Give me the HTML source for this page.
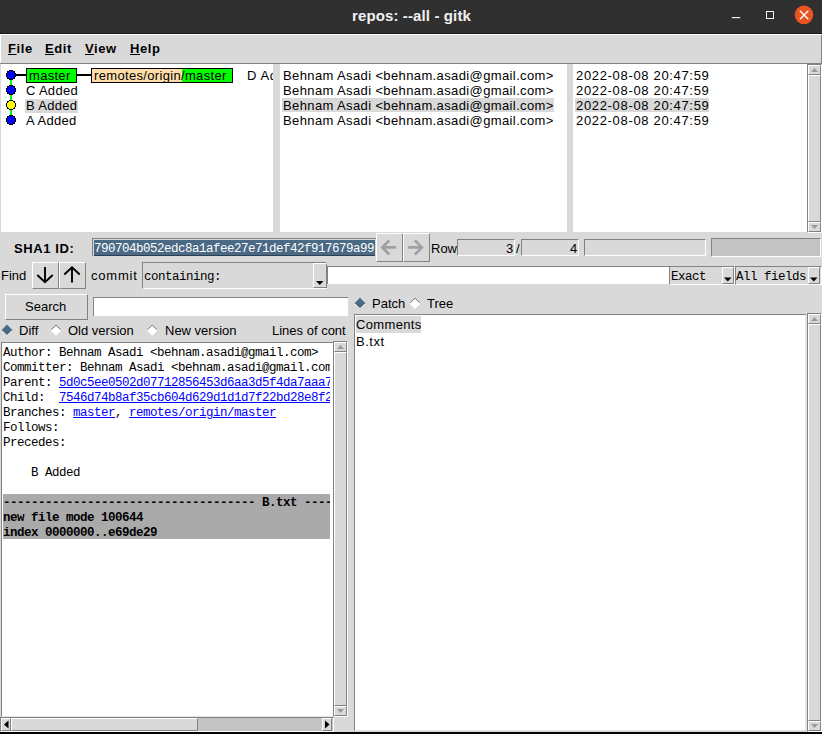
<!DOCTYPE html>
<html><head><meta charset="utf-8">
<style>
*{margin:0;padding:0;box-sizing:border-box}
html,body{width:822px;height:734px;overflow:hidden;background:#d9d9d9}
body{position:relative;font-family:"Liberation Sans",sans-serif;font-size:13px;color:#000}
.a{position:absolute}
.t{position:absolute;white-space:pre;line-height:15px;font-family:"Liberation Sans",sans-serif;font-size:13px;color:#000}
.m{font-family:"Liberation Mono",monospace;font-size:12.5px;letter-spacing:-0.5px}
.w{background:#fff}
.sunk{border-top:1px solid #828282;border-left:1px solid #828282;border-right:1px solid #fff;border-bottom:1px solid #fff}
.rais{border-top:1px solid #fff;border-left:1px solid #fff;border-right:1px solid #828282;border-bottom:1px solid #828282;background:#d9d9d9}
.ul{text-decoration:underline}
</style></head><body>

<!-- title bar -->
<div class="a" style="left:0;top:0;width:822px;height:33px;background:#303030"></div>
<div class="a" style="left:0;top:33px;width:822px;height:1px;background:#181818"></div>
<div class="t" style="left:352px;top:7px;font-size:15px;font-weight:bold;color:#f2f2f2;line-height:17px;letter-spacing:0.12px">repos: --all - gitk</div>
<svg class="a" style="left:730px;top:14px" width="12" height="6"><path d="M1.8 3.6 H10.2" stroke="#f2f2f2" stroke-width="1.2"/></svg>
<div class="a" style="left:766px;top:11px;width:8px;height:8px;border:1.5px solid #f2f2f2"></div>
<svg class="a" style="left:780px;top:0" width="42" height="33"><circle cx="24" cy="14.8" r="9.3" fill="#e95420"/><path d="M19.9 10.8 L28.3 19.2 M28.3 10.8 L19.9 19.2" stroke="#fff" stroke-width="1.3"/></svg>

<!-- menu bar -->
<div class="a" style="left:0;top:34px;width:822px;height:1px;background:#fff"></div>
<div class="a" style="left:0;top:34px;width:1px;height:30px;background:#fff"></div>
<div class="a" style="left:0;top:63px;width:822px;height:1px;background:#828282"></div>
<div class="a" style="left:821px;top:35px;width:1px;height:29px;background:#828282"></div>
<div class="t" style="left:8px;top:41px;font-weight:bold;letter-spacing:0.6px"><span class="ul">F</span>ile</div>
<div class="t" style="left:45px;top:41px;font-weight:bold;letter-spacing:0.6px"><span class="ul">E</span>dit</div>
<div class="t" style="left:85px;top:41px;font-weight:bold;letter-spacing:0.6px"><span class="ul">V</span>iew</div>
<div class="t" style="left:130px;top:41px;font-weight:bold;letter-spacing:0.6px"><span class="ul">H</span>elp</div>

<!-- top panes -->
<div class="a w" style="left:1px;top:64px;width:272px;height:168px"></div>
<div class="a w" style="left:280px;top:64px;width:287px;height:168px"></div>
<div class="a w" style="left:573px;top:64px;width:234px;height:168px"></div>

<!-- graph -->
<svg class="a" style="left:0;top:64px" width="273" height="100" shape-rendering="crispEdges">
  <rect x="10" y="11" width="2" height="45" fill="#00ff00"/>
  <rect x="15" y="10" width="11" height="2" fill="#000"/>
  <rect x="76" y="10" width="15" height="2" fill="#000"/>
  <rect x="26.5" y="4.5" width="50" height="14" fill="#00ff00" stroke="#000" stroke-width="1"/>
  <rect x="91.5" y="4.5" width="141" height="14" fill="#ffddaa" stroke="#000" stroke-width="1"/>
  <rect x="182" y="5" width="50" height="13" fill="#00ff00"/>
  <rect x="25" y="35" width="53" height="14" fill="#d9d9d9"/>
</svg>
<svg class="a" style="left:0;top:0" width="30" height="140" shape-rendering="crispEdges"><rect x="9" y="70" width="4" height="1" fill="#000"/><rect x="7" y="71" width="2" height="1" fill="#000"/><rect x="9" y="71" width="4" height="1" fill="#0000ff"/><rect x="13" y="71" width="2" height="1" fill="#000"/><rect x="7" y="72" width="1" height="1" fill="#000"/><rect x="8" y="72" width="6" height="1" fill="#0000ff"/><rect x="14" y="72" width="1" height="1" fill="#000"/><rect x="6" y="73" width="1" height="1" fill="#000"/><rect x="7" y="73" width="8" height="1" fill="#0000ff"/><rect x="15" y="73" width="1" height="1" fill="#000"/><rect x="6" y="74" width="1" height="1" fill="#000"/><rect x="7" y="74" width="8" height="1" fill="#0000ff"/><rect x="15" y="74" width="1" height="1" fill="#000"/><rect x="6" y="75" width="1" height="1" fill="#000"/><rect x="7" y="75" width="8" height="1" fill="#0000ff"/><rect x="15" y="75" width="1" height="1" fill="#000"/><rect x="6" y="76" width="1" height="1" fill="#000"/><rect x="7" y="76" width="8" height="1" fill="#0000ff"/><rect x="15" y="76" width="1" height="1" fill="#000"/><rect x="7" y="77" width="1" height="1" fill="#000"/><rect x="8" y="77" width="6" height="1" fill="#0000ff"/><rect x="14" y="77" width="1" height="1" fill="#000"/><rect x="7" y="78" width="2" height="1" fill="#000"/><rect x="9" y="78" width="4" height="1" fill="#0000ff"/><rect x="13" y="78" width="2" height="1" fill="#000"/><rect x="9" y="79" width="4" height="1" fill="#000"/><rect x="9" y="85" width="4" height="1" fill="#000"/><rect x="7" y="86" width="2" height="1" fill="#000"/><rect x="9" y="86" width="4" height="1" fill="#0000ff"/><rect x="13" y="86" width="2" height="1" fill="#000"/><rect x="7" y="87" width="1" height="1" fill="#000"/><rect x="8" y="87" width="6" height="1" fill="#0000ff"/><rect x="14" y="87" width="1" height="1" fill="#000"/><rect x="6" y="88" width="1" height="1" fill="#000"/><rect x="7" y="88" width="8" height="1" fill="#0000ff"/><rect x="15" y="88" width="1" height="1" fill="#000"/><rect x="6" y="89" width="1" height="1" fill="#000"/><rect x="7" y="89" width="8" height="1" fill="#0000ff"/><rect x="15" y="89" width="1" height="1" fill="#000"/><rect x="6" y="90" width="1" height="1" fill="#000"/><rect x="7" y="90" width="8" height="1" fill="#0000ff"/><rect x="15" y="90" width="1" height="1" fill="#000"/><rect x="6" y="91" width="1" height="1" fill="#000"/><rect x="7" y="91" width="8" height="1" fill="#0000ff"/><rect x="15" y="91" width="1" height="1" fill="#000"/><rect x="7" y="92" width="1" height="1" fill="#000"/><rect x="8" y="92" width="6" height="1" fill="#0000ff"/><rect x="14" y="92" width="1" height="1" fill="#000"/><rect x="7" y="93" width="2" height="1" fill="#000"/><rect x="9" y="93" width="4" height="1" fill="#0000ff"/><rect x="13" y="93" width="2" height="1" fill="#000"/><rect x="9" y="94" width="4" height="1" fill="#000"/><rect x="9" y="100" width="4" height="1" fill="#000"/><rect x="7" y="101" width="2" height="1" fill="#000"/><rect x="9" y="101" width="4" height="1" fill="#ffff00"/><rect x="13" y="101" width="2" height="1" fill="#000"/><rect x="7" y="102" width="1" height="1" fill="#000"/><rect x="8" y="102" width="6" height="1" fill="#ffff00"/><rect x="14" y="102" width="1" height="1" fill="#000"/><rect x="6" y="103" width="1" height="1" fill="#000"/><rect x="7" y="103" width="8" height="1" fill="#ffff00"/><rect x="15" y="103" width="1" height="1" fill="#000"/><rect x="6" y="104" width="1" height="1" fill="#000"/><rect x="7" y="104" width="8" height="1" fill="#ffff00"/><rect x="15" y="104" width="1" height="1" fill="#000"/><rect x="6" y="105" width="1" height="1" fill="#000"/><rect x="7" y="105" width="8" height="1" fill="#ffff00"/><rect x="15" y="105" width="1" height="1" fill="#000"/><rect x="6" y="106" width="1" height="1" fill="#000"/><rect x="7" y="106" width="8" height="1" fill="#ffff00"/><rect x="15" y="106" width="1" height="1" fill="#000"/><rect x="7" y="107" width="1" height="1" fill="#000"/><rect x="8" y="107" width="6" height="1" fill="#ffff00"/><rect x="14" y="107" width="1" height="1" fill="#000"/><rect x="7" y="108" width="2" height="1" fill="#000"/><rect x="9" y="108" width="4" height="1" fill="#ffff00"/><rect x="13" y="108" width="2" height="1" fill="#000"/><rect x="9" y="109" width="4" height="1" fill="#000"/><rect x="9" y="115" width="4" height="1" fill="#000"/><rect x="7" y="116" width="2" height="1" fill="#000"/><rect x="9" y="116" width="4" height="1" fill="#0000ff"/><rect x="13" y="116" width="2" height="1" fill="#000"/><rect x="7" y="117" width="1" height="1" fill="#000"/><rect x="8" y="117" width="6" height="1" fill="#0000ff"/><rect x="14" y="117" width="1" height="1" fill="#000"/><rect x="6" y="118" width="1" height="1" fill="#000"/><rect x="7" y="118" width="8" height="1" fill="#0000ff"/><rect x="15" y="118" width="1" height="1" fill="#000"/><rect x="6" y="119" width="1" height="1" fill="#000"/><rect x="7" y="119" width="8" height="1" fill="#0000ff"/><rect x="15" y="119" width="1" height="1" fill="#000"/><rect x="6" y="120" width="1" height="1" fill="#000"/><rect x="7" y="120" width="8" height="1" fill="#0000ff"/><rect x="15" y="120" width="1" height="1" fill="#000"/><rect x="6" y="121" width="1" height="1" fill="#000"/><rect x="7" y="121" width="8" height="1" fill="#0000ff"/><rect x="15" y="121" width="1" height="1" fill="#000"/><rect x="7" y="122" width="1" height="1" fill="#000"/><rect x="8" y="122" width="6" height="1" fill="#0000ff"/><rect x="14" y="122" width="1" height="1" fill="#000"/><rect x="7" y="123" width="2" height="1" fill="#000"/><rect x="9" y="123" width="4" height="1" fill="#0000ff"/><rect x="13" y="123" width="2" height="1" fill="#000"/><rect x="9" y="124" width="4" height="1" fill="#000"/></svg>
<div class="t" style="left:29px;top:68px;letter-spacing:0.3px">master</div>
<div class="t" style="left:94px;top:68px;letter-spacing:0.33px">remotes/origin/master</div>
<div class="t" style="left:247px;top:68px;width:26px;overflow:hidden;letter-spacing:0.6px">D Added</div>
<div class="t" style="left:26px;top:83px;letter-spacing:0.3px">C Added</div>
<div class="t" style="left:26px;top:98px;letter-spacing:0.3px">B Added</div>
<div class="t" style="left:26px;top:113px;letter-spacing:0.3px">A Added</div>

<!-- author pane -->
<div class="a" style="left:282px;top:98px;width:272px;height:14px;background:#d9d9d9"></div>
<div class="t" style="left:283px;top:68px;letter-spacing:0.38px">Behnam Asadi &lt;behnam.asadi@gmail.com&gt;</div>
<div class="t" style="left:283px;top:83px;letter-spacing:0.38px">Behnam Asadi &lt;behnam.asadi@gmail.com&gt;</div>
<div class="t" style="left:283px;top:98px;letter-spacing:0.38px">Behnam Asadi &lt;behnam.asadi@gmail.com&gt;</div>
<div class="t" style="left:283px;top:113px;letter-spacing:0.38px">Behnam Asadi &lt;behnam.asadi@gmail.com&gt;</div>

<!-- date pane -->
<div class="a" style="left:575px;top:98px;width:134px;height:14px;background:#d9d9d9"></div>
<div class="t" style="left:576px;top:68px;letter-spacing:0.67px">2022-08-08 20:47:59</div>
<div class="t" style="left:576px;top:83px;letter-spacing:0.67px">2022-08-08 20:47:59</div>
<div class="t" style="left:576px;top:98px;letter-spacing:0.67px">2022-08-08 20:47:59</div>
<div class="t" style="left:576px;top:113px;letter-spacing:0.67px">2022-08-08 20:47:59</div>


<!-- top scrollbar -->
<div class="a" style="left:807px;top:64px;width:15px;height:169px;border-top:1px solid #828282;border-left:1px solid #828282;border-right:1px solid #fff;border-bottom:1px solid #fff;background:#d9d9d9"></div>
<div class="a rais" style="left:808px;top:65px;width:13px;height:10px"></div>
<div class="a rais" style="left:808px;top:75px;width:13px;height:147px"></div>
<div class="a rais" style="left:808px;top:222px;width:13px;height:10px"></div>
<svg class="a" style="left:808px;top:65px" width="13" height="10"><path d="M3 7 L6.5 3 L10 7 Z" fill="#999999"/></svg>
<svg class="a" style="left:808px;top:222px" width="13" height="10"><path d="M3 3 L6.5 7 L10 3 Z" fill="#999999"/></svg>

<!-- row 2: SHA1 -->
<div class="t" style="left:14px;top:241px;font-weight:bold;letter-spacing:0.6px">SHA1 ID:</div>
<div class="a" style="left:92px;top:238px;width:284px;height:18px;border-top:1px solid #828282;border-left:1px solid #828282;background:#d9d9d9"></div>
<div class="a" style="left:94px;top:240px;width:281px;height:16px;background:#4a6984;border-bottom:1px solid #2c3f50"></div>
<div class="t m" style="left:94px;top:242px;color:#fff">790704b052edc8a1afee27e71def42f917679a99</div>
<div class="a rais" style="left:376px;top:233px;width:27px;height:29px"></div>
<div class="a rais" style="left:403px;top:233px;width:27px;height:29px"></div>
<svg class="a" style="left:376px;top:234px" width="56" height="28"><path d="M6.5 13.4 H20.2 M13.3 6.3 L6.3 13.4 L13.3 20.5" stroke="#a0a0a0" stroke-width="2.6" fill="none"/><path d="M32 13.4 H45.7 M38.9 6.3 L45.9 13.4 L38.9 20.5" stroke="#a0a0a0" stroke-width="2.6" fill="none"/></svg>
<div class="t" style="left:431px;top:241px">Row</div>
<div class="a sunk" style="left:457px;top:239px;width:58px;height:17px;background:#d9d9d9"></div>
<div class="t" style="left:506px;top:241px">3</div>
<div class="t" style="left:516px;top:241px">/</div>
<div class="a sunk" style="left:521px;top:239px;width:58px;height:17px;background:#d9d9d9"></div>
<div class="t" style="left:570px;top:241px">4</div>
<div class="a sunk" style="left:584px;top:239px;width:122px;height:17px;background:#d9d9d9"></div>
<div class="a sunk" style="left:711px;top:238px;width:110px;height:19px;background:#c3c3c3"></div>

<!-- row 3: find -->
<div class="t" style="left:1px;top:268px">Find</div>
<div class="a rais" style="left:32px;top:262px;width:27px;height:27px"></div>
<div class="a rais" style="left:59px;top:262px;width:27px;height:27px"></div>
<svg class="a" style="left:33px;top:262px" width="53" height="27"><path d="M12 5 V19.5 M4.3 13 L12 20.3 L19.7 13" stroke="#000" stroke-width="1.9" fill="none"/><path d="M39 20.5 V6 M31.3 12.5 L39 5.2 L46.7 12.5" stroke="#000" stroke-width="1.9" fill="none"/></svg>
<div class="t" style="left:91px;top:268px;letter-spacing:0.8px">commit</div>
<div class="a sunk" style="left:142px;top:262px;width:185px;height:27px;background:#d9d9d9"></div>
<div class="t m" style="left:144px;top:270px">containing:</div>
<div class="a rais" style="left:313px;top:263px;width:14px;height:25px"></div>
<svg class="a" style="left:313px;top:263px" width="14" height="25"><path d="M3 18 L10.5 18 L6.75 22 Z" fill="#000"/></svg>
<div class="a sunk" style="left:327px;top:266px;width:343px;height:18px;background:#fff;border-right:none;border-bottom:none"></div>
<div class="a sunk" style="left:669px;top:266px;width:66px;height:19px;background:#d9d9d9"></div>
<div class="t m" style="left:671px;top:270px">Exact</div>
<div class="a rais" style="left:722px;top:267px;width:12px;height:17px"></div>
<svg class="a" style="left:722px;top:267px" width="12" height="17"><path d="M2 10.5 L9.5 10.5 L5.75 14.5 Z" fill="#000"/></svg>
<div class="a sunk" style="left:735px;top:266px;width:87px;height:19px;background:#d9d9d9"></div>
<div class="t m" style="left:736px;top:270px">All fields</div>
<div class="a rais" style="left:808px;top:267px;width:12px;height:17px"></div>
<svg class="a" style="left:808px;top:267px" width="12" height="17"><path d="M2 10.5 L9.5 10.5 L5.75 14.5 Z" fill="#000"/></svg>

<!-- row 4: search -->
<div class="a rais" style="left:5px;top:294px;width:83px;height:26px"></div>
<div class="t" style="left:25px;top:299px">Search</div>
<div class="a sunk" style="left:93px;top:297px;width:255px;height:19px;background:#fff;border-right:none;border-bottom:none"></div>
<svg class="a" style="left:0;top:0;pointer-events:none" width="822" height="734"><path d="M354.4 303.4 L360 297.79999999999995 L365.6 303.4 L360 309.0 Z" fill="#4a6984"/><path d="M354.7 303.7 L360 308.8 L365.3 303.7" stroke="#fff" stroke-width="1" fill="none"/><path d="M409.4 303.4 L415 297.79999999999995 L420.6 303.4 L415 309.0 Z" fill="#fff"/><path d="M410.2 302.9 L415 298.19999999999993 L419.8 302.9" stroke="#707070" stroke-width="1" fill="none"/><path d="M1.4000000000000004 330.2 L7 324.59999999999997 L12.6 330.2 L7 335.8 Z" fill="#4a6984"/><path d="M1.7000000000000004 330.5 L7 335.6 L12.299999999999999 330.5" stroke="#fff" stroke-width="1" fill="none"/><path d="M50.4 330.2 L56 324.59999999999997 L61.6 330.2 L56 335.8 Z" fill="#fff"/><path d="M51.199999999999996 329.7 L56 324.99999999999994 L60.800000000000004 329.7" stroke="#707070" stroke-width="1" fill="none"/><path d="M146.6 330.2 L152.2 324.59999999999997 L157.79999999999998 330.2 L152.2 335.8 Z" fill="#fff"/><path d="M147.4 329.7 L152.2 324.99999999999994 L156.99999999999997 329.7" stroke="#707070" stroke-width="1" fill="none"/></svg>
<div class="t" style="left:372px;top:296px">Patch</div>
<div class="t" style="left:427px;top:296px">Tree</div>

<!-- row 5: diff radios -->

<div class="t" style="left:19px;top:323px">Diff</div>
<div class="t" style="left:68px;top:323px">Old version</div>
<div class="t" style="left:165px;top:323px">New version</div>
<div class="t" style="left:272px;top:323px">Lines of cont</div>


<!-- lower-left text pane -->
<div class="a" style="left:1px;top:342px;width:332px;height:375px;background:#fff;border-top:1px solid #828282;border-left:1px solid #828282;border-bottom:1px solid #e4e4e4"></div>
<div class="a" style="left:3px;top:494px;width:327px;height:45px;background:#aaaaaa"></div>
<div class="a" style="left:2px;top:343px;width:328px;height:372px;overflow:hidden">
<div class="t m" style="left:1px;top:3px;line-height:15px">Author: Behnam Asadi &lt;behnam.asadi@gmail.com&gt;
Committer: Behnam Asadi &lt;behnam.asadi@gmail.com&gt;
Parent: <span style="color:#0000ff;text-decoration:underline">5d0c5ee0502d07712856453d6aa3d5f4da7aaa7d</span>
Child:  <span style="color:#0000ff;text-decoration:underline">7546d74b8af35cb604d629d1d1d7f22bd28e8f2e</span>
Branches: <span style="color:#0000ff;text-decoration:underline">master</span>, <span style="color:#0000ff;text-decoration:underline">remotes/origin/master</span>
Follows:
Precedes:

    B Added

<b>------------------------------------ B.txt ------------------------------------
new file mode 100644
index 0000000..e69de29</b>
</div>
</div>

<!-- lower-left vscroll -->
<div class="a" style="left:333px;top:341px;width:15px;height:376px;border-top:1px solid #828282;border-left:1px solid #828282;border-right:1px solid #fff;border-bottom:1px solid #fff;background:#d9d9d9"></div>
<div class="a rais" style="left:334px;top:342px;width:13px;height:10px"></div>
<div class="a rais" style="left:334px;top:352px;width:13px;height:354px"></div>
<div class="a rais" style="left:334px;top:706px;width:13px;height:10px"></div>
<svg class="a" style="left:334px;top:342px" width="13" height="10"><path d="M3 7 L6.5 3 L10 7 Z" fill="#999999"/></svg>
<svg class="a" style="left:334px;top:706px" width="13" height="10"><path d="M3 3 L6.5 7 L10 3 Z" fill="#999999"/></svg>

<!-- lower-left hscroll -->
<div class="a" style="left:0;top:717px;width:334px;height:15px;border-top:1px solid #828282;border-left:1px solid #828282;border-right:1px solid #fff;border-bottom:1px solid #fff;background:#c3c3c3"></div>
<div class="a rais" style="left:1px;top:718px;width:10px;height:13px"></div>
<div class="a rais" style="left:11px;top:718px;width:187px;height:13px"></div>
<div class="a rais" style="left:322px;top:718px;width:10px;height:13px"></div>
<svg class="a" style="left:1px;top:718px" width="10" height="13"><path d="M3 6.5 L7.5 2.5 L7.5 10.5 Z" fill="#000"/></svg>
<svg class="a" style="left:322px;top:718px" width="10" height="13"><path d="M7.5 6.5 L3 2.5 L3 10.5 Z" fill="#000"/></svg>

<!-- lower-right pane -->
<div class="a" style="left:354px;top:314px;width:453px;height:417px;background:#fff;border-top:1px solid #828282;border-left:1px solid #828282;border-right:2px solid #e4e4e4;border-bottom:1px solid #e4e4e4"></div>
<div class="a" style="left:356px;top:316px;width:65px;height:17px;background:#d9d9d9"></div>
<div class="t" style="left:356px;top:317px;letter-spacing:0.35px">Comments</div>
<div class="t" style="left:356px;top:334px;letter-spacing:0.5px">B.txt</div>

<!-- lower-right vscroll -->
<div class="a" style="left:807px;top:313px;width:15px;height:419px;border-top:1px solid #828282;border-left:1px solid #828282;border-right:1px solid #fff;border-bottom:1px solid #fff;background:#d9d9d9"></div>
<div class="a rais" style="left:808px;top:314px;width:13px;height:10px"></div>
<div class="a rais" style="left:808px;top:324px;width:13px;height:397px"></div>
<div class="a rais" style="left:808px;top:721px;width:13px;height:10px"></div>
<svg class="a" style="left:808px;top:314px" width="13" height="10"><path d="M3 7 L6.5 3 L10 7 Z" fill="#999999"/></svg>
<svg class="a" style="left:808px;top:721px" width="13" height="10"><path d="M3 3 L6.5 7 L10 3 Z" fill="#999999"/></svg>

<!-- bottom black -->
<div class="a" style="left:0;top:732px;width:822px;height:2px;background:#000"></div>

</body></html>
